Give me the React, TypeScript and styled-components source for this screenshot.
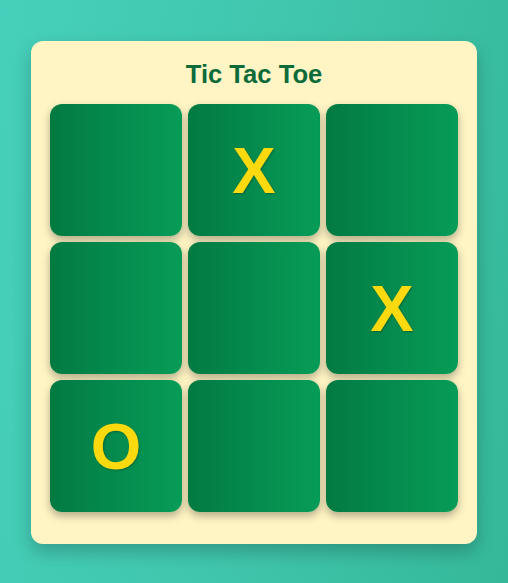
import React from "react";
import styled, { createGlobalStyle } from "styled-components";

const Global = createGlobalStyle`
  html, body { margin: 0; padding: 0; height: 100%; }
  body {
    font-family: "Liberation Sans", Arial, sans-serif;
    background: linear-gradient(100deg, #46d0bb 0%, #40c6ad 50%, #35b899 100%);
  }
  #root { min-height: 100%; }
`;

const Page = styled.div`
  height: 583px;
  display: flex;
  align-items: center;
  justify-content: center;
`;

const Card = styled.div`
  box-sizing: border-box;
  width: 446px;
  height: 503px;
  margin-top: 1px;
  padding: 19px 19px 32px;
  background: #fff5c4;
  border-radius: 12px;
  box-shadow: 0 8px 18px rgba(0, 0, 0, 0.22);
  display: flex;
  flex-direction: column;
  align-items: center;
`;

const Title = styled.h1`
  margin: 0 0 15.5px;
  font-size: 25.6px;
  font-weight: 700;
  line-height: normal;
  color: #0d6b3a;
`;

const Board = styled.div`
  display: grid;
  grid-template-columns: repeat(3, 132px);
  grid-auto-rows: 132px;
  gap: 6px;
`;

const Cell = styled.button`
  border: none;
  padding: 0;
  border-radius: 12px;
  background: linear-gradient(to right, #027a42, #079c58);
  box-shadow: 0 4px 8px rgba(0, 0, 0, 0.3);
  display: flex;
  align-items: center;
  justify-content: center;
  font-family: "Liberation Sans", Arial, sans-serif;
  font-size: 65px;
  font-weight: 700;
  color: #fbd90f;
  text-shadow: 1px 1px 2px rgba(0, 0, 0, 0.25);
  cursor: pointer;
`;

const board = ["", "X", "", "", "", "X", "O", "", ""];

export default function App() {
  return (
    <>
      <Global />
      <Page>
        <Card>
          <Title>Tic Tac Toe</Title>
          <Board>
            {board.map((v, i) => (
              <Cell key={i}>{v}</Cell>
            ))}
          </Board>
        </Card>
      </Page>
    </>
  );
}
